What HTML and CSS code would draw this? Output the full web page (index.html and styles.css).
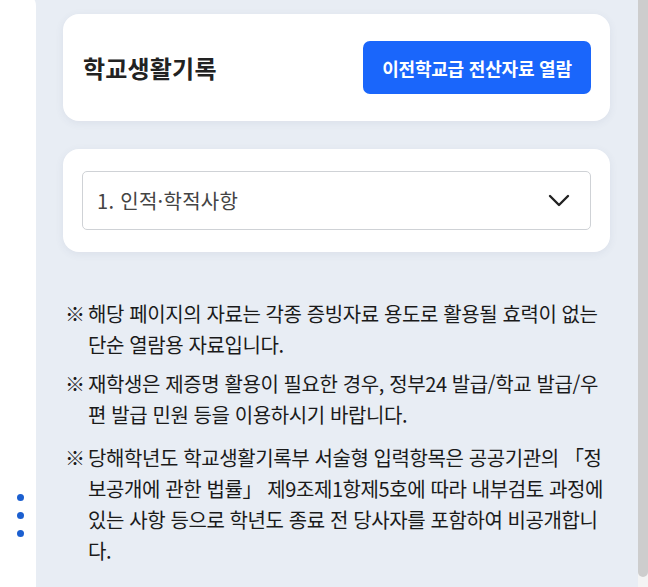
FILE: index.html
```html
<!DOCTYPE html>
<html lang="ko">
<head>
<meta charset="utf-8">
<title>학교생활기록</title>
<link rel="stylesheet" href="styles.css">
</head>
<body>
<div class="app">
  <aside class="side">
    <div class="dots"><span class="dot"></span><span class="dot"></span><span class="dot"></span></div>
  </aside>
  <main class="content">
    <section class="card head">
      <h1 class="title">학교생활기록</h1>
      <button class="btn" type="button">이전학교급 전산자료 열람</button>
    </section>
    <section class="card sel-card">
      <div class="select">
        <span class="select-text">1. 인적·학적사항</span>
        <svg class="chev" width="22" height="13" viewBox="0 0 22 13"><path d="M2 2 L11 11 L20 2" fill="none" stroke="#222" stroke-width="2.4" stroke-linecap="round" stroke-linejoin="round"/></svg>
      </div>
    </section>
    <div class="notes">
      <p class="note"><span class="mark">※</span>해당 페이지의 자료는 각종 증빙자료 용도로 활용될 효력이 없는 단순 열람용 자료입니다.</p>
      <p class="note"><span class="mark">※</span>재학생은 제증명 활용이 필요한 경우, 정부24 발급/학교 발급/우편 발급 민원 등을 이용하시기 바랍니다.</p>
      <p class="note note-law"><span class="mark">※</span>당해학년도 학교생활기록부 서술형 입력항목은 공공기관의 「정보공개에 관한 법률」 제9조제1항제5호에 따라 내부검토 과정에 있는 사항 등으로 학년도 종료 전 당사자를 포함하여 비공개합니다.</p>
    </div>
  </main>
  <div class="scrollbar"><div class="thumb"></div></div>
</div>
</body>
</html>
```
FILE: styles.css
```css
html, body {
  margin: 0;
  padding: 0;
}
body {
  width: 648px;
  height: 587px;
  overflow: hidden;
  background: #e8edf4;
  font-family: "Noto Sans CJK KR", "Noto Sans", sans-serif;
  color: #222;
}
.app {
  display: flex;
  height: 587px;
}
.side {
  width: 36px;
  flex: none;
  background: #fff;
  border-top-right-radius: 14px;
  margin-top: -8px;
  display: flex;
  flex-direction: column;
  align-items: center;
  padding-top: 502px;
  box-sizing: border-box;
}
.dots {
  display: flex;
  flex-direction: column;
  gap: 11px;
  margin-left: 4px;
}
.dot {
  width: 7px;
  height: 7px;
  border-radius: 50%;
  background: #1b5fd0;
}
.content {
  flex: 1;
  padding: 14px 28px 0 27px;
  min-width: 0;
}
.card {
  background: #fff;
  border-radius: 16px;
  box-shadow: 0 2px 8px rgba(60, 80, 110, 0.08);
}
.head {
  height: 107px;
  box-sizing: border-box;
  display: flex;
  align-items: center;
  justify-content: space-between;
  padding: 0 19px 0 20px;
}
.title {
  margin: 0;
  font-size: 24px;
  font-weight: 700;
  color: #222;
  letter-spacing: 0.2px;
}
.btn {
  width: 228px;
  height: 53px;
  border: none;
  border-radius: 7px;
  background: #1a66fb;
  color: #fff;
  font-family: inherit;
  font-size: 18px;
  font-weight: 700;
  letter-spacing: -0.2px;
  padding: 0;
}
.sel-card {
  margin-top: 28px;
  padding: 22px 19px 22px 19px;
}
.select {
  height: 59px;
  box-sizing: border-box;
  border: 1px solid #cfd2d6;
  border-radius: 5px;
  display: flex;
  align-items: center;
  justify-content: space-between;
  padding: 0 20px 0 14px;
}
.select-text {
  font-size: 20px;
  color: #444;
  letter-spacing: 0.3px;
}
.chev {
  display: block;
}
.notes {
  padding: 46px 4px 0 2px;
}
.note {
  margin: 0 0 8px 0;
  font-size: 20px;
  line-height: 31px;
  color: #1a1a1a;
  padding-left: 23px;
  text-indent: -23px;
  letter-spacing: -0.4px;
}
.note-law {
  margin-top: 12px;
}
.mark {
  display: inline-block;
  width: 23px;
  text-indent: 0;
}
.scrollbar {
  width: 10px;
  flex: none;
  background: #f4f4f4;
}
.thumb {
  height: 577px;
  background: #cdcdcd;
  border-radius: 0 0 5px 5px;
}
```
